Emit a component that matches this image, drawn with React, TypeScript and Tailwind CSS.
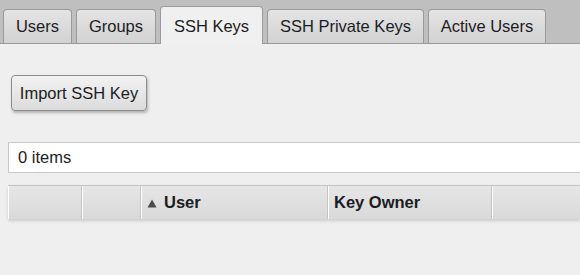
import React from 'react';

const tabs = [
  { label: 'Users', w: 69 },
  { label: 'Groups', w: 80 },
  { label: 'SSH Keys', w: 103, active: true },
  { label: 'SSH Private Keys', w: 157 },
  { label: 'Active Users', w: 118 },
];

const cols = [
  { label: '', w: 74 },
  { label: '', w: 59 },
  { label: 'User', w: 187, sort: true },
  { label: 'Key Owner', w: 164 },
  { label: '', w: 100 },
];

export default function App() {
  return (
    <div
      className="w-[580px] h-[275px] overflow-hidden bg-[#efefef] text-[16.5px] text-[#1c1c24]"
      style={{ fontFamily: '"Liberation Sans", Arial, sans-serif' }}
    >
      {/* Tab bar */}
      <div className="h-[44px] bg-[#bfbfbf] border-b border-[#9a9a9a] flex items-end gap-[4px] pl-[3px]">
        {tabs.map((t) =>
          t.active ? (
            <div
              key={t.label}
              style={{ width: t.w }}
              className="h-[38px] -mb-px bg-[#f0f0f0] border border-b-0 border-[#9a9a9a] rounded-t-[4px] flex items-center justify-center pt-[2px]"
            >
              {t.label}
            </div>
          ) : (
            <div
              key={t.label}
              style={{ width: t.w }}
              className="h-[34px] bg-gradient-to-b from-[#e4e4e4] to-[#d2d2d2] border border-b-0 border-[#9a9a9a] rounded-t-[4px] flex items-center justify-center"
            >
              {t.label}
            </div>
          )
        )}
      </div>

      <div className="pl-[8px]">
        {/* Toolbar */}
        <div className="pt-[31px] pl-[3px]">
          <button className="h-[36px] w-[136px] rounded-[4px] border border-[#8c8c8c] bg-gradient-to-b from-[#f2f2f2] to-[#dcdcdc] shadow-[1px_2px_3px_rgba(0,0,0,0.25)] text-[16.5px] text-[#1c1c24]">
            Import SSH Key
          </button>
        </div>

        {/* Item count */}
        <div className="mt-[31px] h-[31px] bg-white border-y border-l border-[#c8c8c8] flex items-center pl-[9px]">
          0 items
        </div>

        {/* Grid header */}
        <div className="mt-[12px] h-[34px] flex bg-gradient-to-b from-[#e6e6e6] to-[#d9d9d9] border-t border-[#c4c4c4] shadow-[0_2px_3px_rgba(0,0,0,0.15)]">
          {cols.map((c, i) => (
            <div
              key={i}
              style={{ width: c.w }}
              className={`h-full flex items-center font-bold shrink-0 border-l border-white ${i < cols.length - 1 ? 'border-r border-r-[#c4c4c4]' : ''} pl-[5px]`}
            >
              {c.sort && (
                <svg width="10" height="9" viewBox="0 0 10 9" className="mr-[7px] mt-[1px]">
                  <path d="M5 0.5 L9.5 8.5 L0.5 8.5 Z" fill="#4a4a4a" />
                </svg>
              )}
              {c.label}
            </div>
          ))}
        </div>
      </div>
    </div>
  );
}
